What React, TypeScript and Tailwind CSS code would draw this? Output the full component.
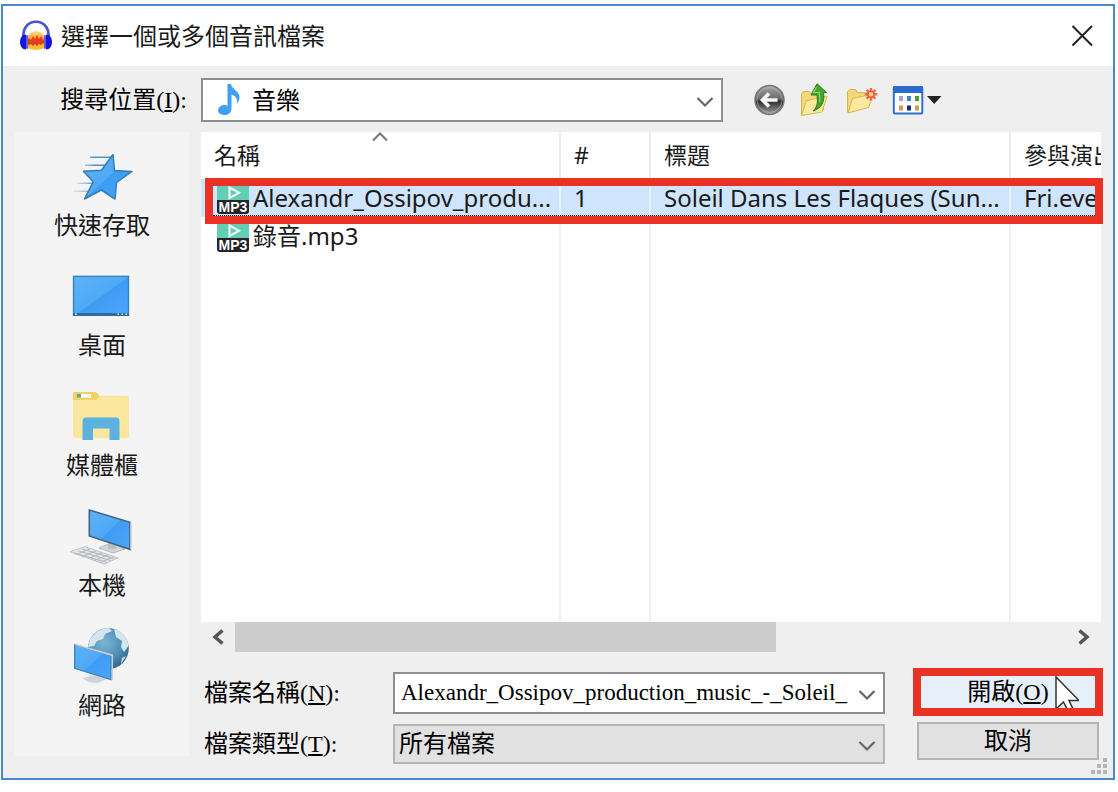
import type { ReactNode } from "react";

const UI_FONT = "font-['Noto_Sans','Noto_Sans_CJK_TC',sans-serif]";
const SERIF_FONT = "font-['Liberation_Serif','Noto_Sans_CJK_TC',serif]";

function AudacityLogo() {
  return (
    <svg width="34" height="32" viewBox="0 0 34 32" aria-hidden="true">
      <defs>
        <linearGradient id="flame" x1="0" y1="0" x2="0" y2="1">
          <stop offset="0" stopColor="#fbe08a" />
          <stop offset=".45" stopColor="#f59a2c" />
          <stop offset="1" stopColor="#fbc63c" />
        </linearGradient>
      </defs>
      <path d="M8 17q4-6 9-6t9 6v11q-4 2-9 2t-9-2z" fill="url(#flame)" />
      <path d="M8 22l2-4 2 2 2-4 2 3 2-4 2 4 2-3 2 4 2-2v6l-2-1-2 2-2-1-2 2-2-2-2 2-2-2-2 1-2-1z" fill="#e2401b" />
      <path d="M4.500 18C3.500 8 9 1.800 17 1.800S30.500 8 29.500 18" fill="none" stroke="#4a50d2" strokeWidth="2.600" />
      <path d="M7 14.500v15C3 29.500 1 26 1 22s2-7.500 6-7.500zM27 14.500v15c4 0 6-3.500 6-7.500s-2-7.500-6-7.500z" fill="#1518dc" />
      <rect x="7" y="15" width="2" height="14" rx="1" fill="#5a62e6" />
      <rect x="25" y="15" width="2" height="14" rx="1" fill="#5a62e6" />
    </svg>
  );
}

function Chevron({ className }: { className: string }) {
  return (
    <svg className={className} width="18" height="12" viewBox="0 0 18 12" fill="none" stroke="#666" strokeWidth="2.200" aria-hidden="true">
      <path d="M1.500 2L9 9.500 16.500 2" />
    </svg>
  );
}

function BackIcon() {
  return (
    <svg width="32" height="32" viewBox="0 0 32 32" aria-hidden="true">
      <defs>
        <linearGradient id="orb" x1="0" y1="0" x2="0" y2="1">
          <stop offset="0" stopColor="#a9a9a9" />
          <stop offset=".45" stopColor="#6a6a6a" />
          <stop offset=".55" stopColor="#2e2e2e" />
          <stop offset="1" stopColor="#a2a2a2" />
        </linearGradient>
      </defs>
      <circle cx="15.500" cy="16" r="14.500" fill="url(#orb)" stroke="#777" strokeWidth="1.500" />
      <circle cx="15.500" cy="16" r="12.500" fill="none" stroke="#c9c9c9" strokeOpacity=".5" />
      <path d="M15 9.500L8.500 16l6.500 6.500M9 16h14.500" fill="none" stroke="#f6f6f6" strokeWidth="3.600" />
    </svg>
  );
}

function UpFolderIcon() {
  return (
    <svg width="32" height="34" viewBox="0 0 32 34" aria-hidden="true">
      <path d="M1.500 32V11l2-2.500h6l2 2.500 12-1v17z" fill="#f3d778" stroke="#d8b351" />
      <path d="M1.500 32.500l5-15 20.500-4-5 15.500z" fill="#fbe9a0" stroke="#dcb64f" />
      <path d="M13 28c4.500-4 5-9 4-16h-6L17 .800 26.500 9.500H23.500c1.500 9-1.500 15.500-10.500 18.500z" fill="#45a52f" stroke="#2b7a20" />
      <path d="M16.500 4l-3 5.500h5.500c1 4 1 7 .500 9.500" fill="none" stroke="#8fd36c" strokeWidth="1.200" />
    </svg>
  );
}

function NewFolderIcon() {
  return (
    <svg width="32" height="32" viewBox="0 0 32 32" aria-hidden="true">
      <path d="M1.500 28V7.500l2-2h6l2 3 12 .500v13z" fill="#f3d778" stroke="#d8b351" />
      <path d="M2 29l4.500-14.500 21-4.500-5 13.500z" fill="#fbe9a0" stroke="#dcb64f" />
      <path d="M25 4v12.500M18.800 10.200h12.500M20.600 5.800l8.800 8.800M29.400 5.800l-8.800 8.800" stroke="#ea6a45" strokeWidth="2.400" />
      <circle cx="25" cy="10.200" r="3" fill="#fbd4a0" stroke="#e8613a" strokeWidth="1.500" />
    </svg>
  );
}

function ViewIcon() {
  return (
    <svg width="50" height="32" viewBox="0 0 50 32" aria-hidden="true">
      <rect x="1.800" y="3" width="28.500" height="26.500" rx="1" fill="#fff" stroke="#2f6fd0" strokeWidth="2" />
      <path d="M1 4q0-2 2-2h26q2 0 2 2v5H1z" fill="#2c6acb" />
      <path d="M7 12h4v5H7z" fill="#a9a3cf" />
      <path d="M15 12h4v5h-4z" fill="#3f83d8" />
      <path d="M23 12h4v5h-4z" fill="#4f9a35" />
      <path d="M7 21.500h4v5H7z" fill="#ec8b63" />
      <path d="M15 21.500h4v5h-4z" fill="#142a8c" />
      <path d="M23 21.500h4v5h-4z" fill="#c4a53a" />
      <path d="M35 12h14.500L42.200 20z" fill="#222" />
    </svg>
  );
}

function NoteIcon() {
  return (
    <svg className="pointer-events-none absolute left-4 top-1" width="26" height="34" viewBox="0 0 26 34" aria-hidden="true">
      <path d="M10.500 2h3.500c.500 5 8.500 7 8.500 13 0 3-1 5-2.500 6.500 1-6-3-8-5.500-9V27c0 3.500-3 6-6.500 6S1 31.500 1 28.500C1 25 4.500 23 7.500 23c1.200 0 2.200.300 3 .700z" fill="#3f9ff5" />
    </svg>
  );
}

function Mp3Icon() {
  return (
    <svg className="shrink-0" width="32" height="32" viewBox="0 0 32 32" aria-hidden="true">
      <path d="M0 18V3q0-3 3-3h26q3 0 3 3v15z" fill="#62cfb4" />
      <path d="M12.500 5.500v10.500L22 10.800z" fill="none" stroke="#fff" strokeWidth="2" />
      <path d="M0 18h32v11q0 3-3 3H3q-3 0-3-3z" fill="#242428" />
      <text x="16" y="29.500" textAnchor="middle" fontFamily="Liberation Sans, sans-serif" fontSize="14" fontWeight="700" fill="#fff">MP3</text>
    </svg>
  );
}

function Place({ label, children }: { label: string; children: ReactNode }) {
  return (
    <li>
      <button type="button" className="flex h-[120px] w-full flex-col items-center pt-4 text-[24px] leading-[34px]">
        <svg className="overflow-visible" width="60" height="60" viewBox="0 0 60 60" aria-hidden="true">{children}</svg>
        {label}
      </button>
    </li>
  );
}

function Sidebar() {
  return (
    <ul className="mb-2 w-[174px] shrink-0 bg-[#f4f4f4]">
      <Place label="快速存取">
        <defs>
          <linearGradient id="blue" x1="0" y1="0" x2="1" y2="1">
            <stop offset="0" stopColor="#5eb2f7" />
            <stop offset=".5" stopColor="#4fa9f6" />
            <stop offset=".52" stopColor="#3f9cf4" />
            <stop offset="1" stopColor="#4ba6f8" />
          </linearGradient>
          <linearGradient id="trail" gradientUnits="userSpaceOnUse" x1="0" y1="0" x2="38" y2="0">
            <stop offset="0" stopColor="#9ac6e6" stopOpacity=".2" />
            <stop offset=".6" stopColor="#4a94cc" />
          </linearGradient>
        </defs>
        <path d="M18 8.500h22v1.500H18zM13 16.500h20v1.500H13zM5 34.500h16v1.500H5zM1 42.500h17v1.500H1z" fill="url(#trail)" />
        <path d="M41 6.500l1.500 16 17.500 1-15.500 11-1.500 16.500L29.300 42 12.500 51l8.800-17.300-9.800-10.400 18-1z" fill="url(#blue)" stroke="#2f7fb8" strokeWidth="1.500" strokeLinejoin="round" />
      </Place>
      <Place label="桌面">
        <rect x="1.500" y="8.300" width="55" height="39" fill="url(#blue)" stroke="#2f82bd" strokeWidth="1.300" />
        <path d="M1 45h56v3H1z" fill="#2a6d9e" />
        <path d="M3 45.500h1.500v1.500H3zM45.500 45.500H47v1.500h-1.500zM49.500 45.500H51v1.500h-1.500zM53.500 45.500H55v1.500h-1.500z" fill="#fff" />
      </Place>
      <Place label="媒體櫃">
        <path d="M3 4h20q1.500 0 4 3.700H55q2 0 2 2v38.600q0 2-2 2H3q-2 0-2-2V6q0-2 2-2z" fill="#fae69c" />
        <path d="M3 4h20q2 0 4 4-2 4-4 4H1V6q0-2 2-2z" fill="#f5d165" />
        <path d="M5 6h4v3.500H5z" fill="#55a9a9" />
        <path d="M9 6h10v3.500H9z" fill="#fff" />
        <path d="M10.500 52V33q0-3.500 3.500-3.500h30q3.500 0 3.500 3.500v19h-10V40.500H21V52z" fill="#5bb1df" />
      </Place>
      <Place label="本機">
        <path d="M27 40l12-5 14 6-12 4z" fill="#d3d7da" stroke="#a9afb4" strokeWidth=".8" />
        <path d="M36 32l8 3v6h-8z" fill="#b9bfc4" />
        <path d="M17.300 2L58 14.300v27L17.300 28z" fill="url(#blue)" stroke="#46677f" strokeWidth="1.600" />
        <path d="M58 14.300l1.500-.500v27L58 41.300z" fill="#b4bfc7" />
        <path d="M-2 43.700L13 38.700 46 50 32 56z" fill="#e4e6e8" stroke="#b4b8bc" strokeWidth=".8" />
        <path d="M2 45l33 9.500M6.500 43l32 9.500M10 41l32 9.500M4 46.500L18 41M10 48.500L24 43M16 50.500L30 45M22 52.500L36 47M28 54.500L41 49" stroke="#b2b7bb" strokeWidth="1" />
      </Place>
      <Place label="網路">
        <defs>
          <radialGradient id="globe" cx=".4" cy=".35" r=".7">
            <stop offset="0" stopColor="#7cb6d3" />
            <stop offset=".6" stopColor="#5190b6" />
            <stop offset="1" stopColor="#2f6689" />
          </radialGradient>
        </defs>
        <circle cx="36.300" cy="20.500" r="20.500" fill="url(#globe)" />
        <path d="M18 11Q26 0 37 0l3 3-7 3-2 5-6 2-3 5-6 1zM42 1q13 4 14.500 17L52 24l-3-5 1-6-6-4zM50 30l4-2-5 8z" fill="#d3e6ee" />
        <path d="M11 50l10-3 14 4-9 4q-12 0-15-5z" fill="#cfd5d9" />
        <path d="M2.700 16.500L39 27.500v24L2.700 40.300z" fill="url(#blue)" stroke="#3b82b5" strokeWidth="1.300" />
        <path d="M2.700 15.500L41 26.500v25l-1.500.500V28L2.700 17z" fill="#c6d0d6" />
      </Place>
    </ul>
  );
}

const columns = ["名稱", "#", "標題", "參與演出者"];
const files = [
  { name: "Alexandr_Ossipov_produ...", no: "1", title: "Soleil Dans Les Flaques (Sun...", artist: "Fri.events", selected: true },
  { name: "錄音.mp3", no: "", title: "", artist: "", selected: false },
];

function FileList() {
  return (
    <div className="relative flex flex-1 flex-col bg-white">
      <div className="overflow-hidden">
        <table className="w-full table-fixed border-separate border-spacing-0 whitespace-nowrap">
          <colgroup>
            <col className="w-[360px]" />
            <col className="w-[90px]" />
            <col className="w-[360px]" />
            <col />
          </colgroup>
          <thead>
            <tr className="h-[47px]">
              {columns.map((c, i) => (
                <th key={c} scope="col" className="relative overflow-hidden border-r-2 border-[#ececec] p-0 pl-[13px] text-left text-[23px] font-normal last:border-r-0">
                  {c}
                  {i === 0 && (
                    <svg className="absolute left-1/2 top-0 -translate-x-1/2" width="18" height="10" viewBox="0 0 18 10" fill="none" stroke="#777" strokeWidth="2" aria-hidden="true">
                      <path d="M2 8.500L9 1.500l7 7" />
                    </svg>
                  )}
                </th>
              ))}
            </tr>
          </thead>
          <tbody className="text-[24px] leading-[38px]">
            {files.map((f) => (
              <tr key={f.name} className={f.selected ? "h-[38px] bg-[#cfe4fd]" : "h-[38px]"}>
                <td className="border-r-2 border-[#e9f1fc] p-0 pl-4">
                  <div className="flex items-center gap-1">
                    <Mp3Icon />
                    {f.name}
                  </div>
                </td>
                <td className="border-r-2 border-[#e9f1fc] p-0 pl-[13px]">{f.no}</td>
                <td className="border-r-2 border-[#e9f1fc] p-0 pl-[13px]">{f.title}</td>
                <td className="overflow-hidden p-0 pl-[13px]">{f.artist}</td>
              </tr>
            ))}
          </tbody>
        </table>
      </div>
      <div className="grid flex-1 grid-cols-[360px_90px_360px_1fr]">
        <div className="border-r-2 border-[#e9f1fc]" />
        <div className="border-r-2 border-[#e9f1fc]" />
        <div className="border-r-2 border-[#e9f1fc]" />
      </div>
      <div className="pointer-events-none absolute -right-0.5 left-1 top-[46px] h-[46px] border-8 border-[#e93223]">
        <div className="h-full border-b border-dotted border-black" />
      </div>
    </div>
  );
}

function ScrollBar() {
  return (
    <div className="flex h-[30px]">
      <button type="button" aria-label="向左捲動" className="flex w-[34px] items-center justify-center">
        <svg width="14" height="16" viewBox="0 0 14 16" fill="none" stroke="#555" strokeWidth="3.500" aria-hidden="true">
          <path d="M11.500 1.500L4 8l7.500 6.500" />
        </svg>
      </button>
      <div className="flex-1">
        <div className="h-full w-[65%] bg-[#cdcdcd]" />
      </div>
      <button type="button" aria-label="向右捲動" className="flex w-[34px] items-center justify-center">
        <svg width="14" height="16" viewBox="0 0 14 16" fill="none" stroke="#555" strokeWidth="3.500" aria-hidden="true">
          <path d="M2.500 1.500L10 8l-7.500 6.500" />
        </svg>
      </button>
    </div>
  );
}

export default function App() {
  return (
    <div className={`flex min-h-screen flex-col bg-white pb-3 pl-px pr-[3px] pt-1 text-[#1a1a1a] ${UI_FONT}`}>
      <main className="relative flex flex-1 flex-col border-2 border-[#4a86cb] bg-[#efefef]">
        <header className="flex h-[60px] items-center bg-white pl-4 pr-5">
          <AudacityLogo />
          <h1 className="ml-2 flex-1 text-[24px]">選擇一個或多個音訊檔案</h1>
          <button type="button" aria-label="關閉">
            <svg width="22" height="22" viewBox="0 0 22 22" stroke="#222" strokeWidth="2" aria-hidden="true">
              <path d="M1.500 1l19.500 19.500M21 1L1.500 20.500" />
            </svg>
          </button>
        </header>

        <div className="flex items-center pb-[10px] pr-3 pt-3">
          <label htmlFor="place" className={`w-[198px] shrink-0 pr-[14px] text-right text-[24px] text-black ${SERIF_FONT}`}>
            搜尋位置(<u className="underline-offset-2">I</u>):
          </label>
          <div className="relative flex-1">
            <NoteIcon />
            <select id="place" className="h-11 w-full appearance-none border-2 border-[#8f8f8f] bg-white pl-[49px] text-[24px] text-black">
              <option>音樂</option>
            </select>
            <Chevron className="pointer-events-none absolute right-[9px] top-[18px]" />
          </div>
          <div className="flex w-[378px] shrink-0 items-center gap-[14px] pl-[31px]">
            <button type="button" aria-label="上一頁"><BackIcon /></button>
            <button type="button" aria-label="往上一層"><UpFolderIcon /></button>
            <button type="button" aria-label="建立新資料夾"><NewFolderIcon /></button>
            <button type="button" aria-label="檢視功能表"><ViewIcon /></button>
          </div>
        </div>

        <div className="flex flex-1 gap-3 pb-[14px] pl-3 pr-3">
          <Sidebar />
          <div className="flex min-w-0 flex-1 flex-col">
            <FileList />
            <ScrollBar />
            <div className={`mt-5 flex gap-8 pr-0.5 text-[24px] text-black ${SERIF_FONT}`}>
              <div className="grid flex-1 grid-cols-[192px_1fr] items-center gap-y-[10px]">
                <label htmlFor="filename" className="pl-[3px]">
                  檔案名稱(<u className="underline-offset-2">N</u>):
                </label>
                <div className="flex h-[42px] items-center border-2 border-[#8f8f8f] bg-white pl-1.5 pr-[7px]">
                  <input id="filename" type="text" className="min-w-0 flex-1 text-[23px] outline-none" defaultValue="Alexandr_Ossipov_production_music_-_Soleil_" />
                  <button type="button" aria-label="最近的檔案"><Chevron className="mt-1" /></button>
                </div>
                <label htmlFor="filetype" className="pl-[3px]">
                  檔案類型(<u className="underline-offset-2">T</u>):
                </label>
                <div className="relative">
                  <select id="filetype" className="block h-10 w-full appearance-none border-2 border-[#b4b4b4] bg-[#e1e1e1] pl-1">
                    <option>所有檔案</option>
                  </select>
                  <Chevron className="pointer-events-none absolute right-[9px] top-4" />
                </div>
              </div>
              <div className="flex w-[182px] shrink-0 flex-col gap-[10px]">
                <div className="relative">
                  <button type="button" className="h-10 w-full bg-[#e5f0fa]">
                    開啟(<u className="underline-offset-2">O</u>)
                  </button>
                  <div className="pointer-events-none absolute -inset-1 flex justify-end overflow-hidden border-8 border-[#e93223]">
                    <svg className="mr-4 shrink-0" width="24" height="36" viewBox="0 0 24 36" aria-hidden="true">
                      <path d="M1 1v32l7.500-7 5 10 5-2-4.500-9.500H24z" fill="#fff" stroke="#333" strokeWidth="1.500" />
                    </svg>
                  </div>
                </div>
                <button type="button" className="h-[38px] border-2 border-[#b4b4b4] bg-[#e1e1e1] leading-[30px]">取消</button>
              </div>
            </div>
          </div>
        </div>

        <svg className="absolute bottom-1 right-1.5" width="16" height="16" viewBox="0 0 16 16" fill="#b5b5b5" aria-hidden="true">
          <path d="M12 0h4v4h-4zM6 6h4v4H6zM12 6h4v4h-4zM0 12h4v4H0zM6 12h4v4H6zM12 12h4v4h-4z" />
        </svg>
      </main>
    </div>
  );
}
